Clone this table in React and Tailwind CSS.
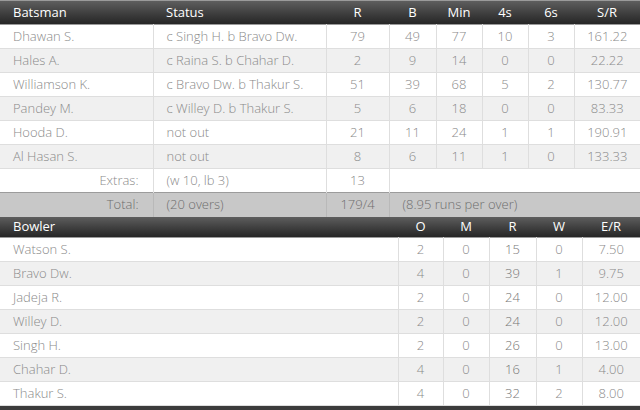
import React from "react";

const bat = [
  ["Dhawan S.", "c Singh H. b Bravo Dw.", "79", "49", "77", "10", "3", "161.22"],
  ["Hales A.", "c Raina S. b Chahar D.", "2", "9", "14", "0", "0", "22.22"],
  ["Williamson K.", "c Bravo Dw. b Thakur S.", "51", "39", "68", "5", "2", "130.77"],
  ["Pandey M.", "c Willey D. b Thakur S.", "5", "6", "18", "0", "0", "83.33"],
  ["Hooda D.", "not out", "21", "11", "24", "1", "1", "190.91"],
  ["Al Hasan S.", "not out", "8", "6", "11", "1", "0", "133.33"],
];

const bowl = [
  ["Watson S.", "2", "0", "15", "0", "7.50"],
  ["Bravo Dw.", "4", "0", "39", "1", "9.75"],
  ["Jadeja R.", "2", "0", "24", "0", "12.00"],
  ["Willey D.", "2", "0", "24", "0", "12.00"],
  ["Singh H.", "2", "0", "26", "0", "13.00"],
  ["Chahar D.", "4", "0", "16", "1", "4.00"],
  ["Thakur S.", "4", "0", "32", "2", "8.00"],
];

const head = "h-[24px] bg-linear-to-b from-[#5e5e5e] to-[#262626] text-white text-[13px] border-b border-[#9a9a9a]";
const cell = "border-b border-r border-[#dedede] last:border-r-0 text-center px-0";

export default function App() {
  return (
    <div className="w-[640px] h-[410px] bg-white overflow-hidden text-[13px] font-light text-[#8a8a8a] leading-none" style={{ fontFamily: "'Open Sans', 'DejaVu Sans', sans-serif" }}>
      <table className="w-[640px] table-fixed border-collapse">
        <colgroup>
          <col className="w-[153px]" />
          <col className="w-[173px]" />
          <col className="w-[63px]" />
          <col className="w-[47px]" />
          <col className="w-[46px]" />
          <col className="w-[46px]" />
          <col className="w-[46px]" />
          <col className="w-[66px]" />
        </colgroup>
        <thead>
          <tr className={head}>
            <th className="text-left pl-[13px] font-normal border-t border-[#9a9a9a]">Batsman</th>
            <th className="text-left pl-[13px] font-normal border-t border-[#9a9a9a]">Status</th>
            <th className="font-normal border-t border-[#9a9a9a]">R</th>
            <th className="font-normal border-t border-[#9a9a9a]">B</th>
            <th className="font-normal border-t border-[#9a9a9a]">Min</th>
            <th className="font-normal border-t border-[#9a9a9a]">4s</th>
            <th className="font-normal border-t border-[#9a9a9a]">6s</th>
            <th className="font-normal border-t border-[#9a9a9a]">S/R</th>
          </tr>
        </thead>
        <tbody>
          {bat.map((r, i) => (
            <tr key={i} className={`h-[24px] ${i % 2 ? "bg-[#f0f0f0]" : "bg-white"}`}>
              <td className={`${cell} !text-left pl-[13px] whitespace-nowrap`}>{r[0]}</td>
              <td className={`${cell} !text-left pl-[13px] whitespace-nowrap`}>{r[1]}</td>
              {r.slice(2).map((v, j) => (
                <td key={j} className={cell}>{v}</td>
              ))}
            </tr>
          ))}
          <tr className="h-[24px] bg-white">
            <td className="border-r border-[#dedede] text-right pr-[14px]">Extras:</td>
            <td className="border-r border-[#dedede] text-left pl-[13px]">(w 10, lb 3)</td>
            <td className="border-r border-[#dedede] text-center">13</td>
            <td colSpan={5}></td>
          </tr>
          <tr className="h-[24px] bg-[#c8c8c8] text-[#6e6e6e] border-t border-[#9c9c9c]">
            <td className="border-r border-[#b9b9b9] text-right pr-[14px]">Total:</td>
            <td className="border-r border-[#b9b9b9] text-left pl-[13px]">(20 overs)</td>
            <td className="border-r border-[#b9b9b9] text-center">179/4</td>
            <td colSpan={5} className="text-left pl-[13px] whitespace-nowrap">(8.95 runs per over)</td>
          </tr>
        </tbody>
      </table>
      <table className="w-[640px] table-fixed border-collapse">
        <colgroup>
          <col className="w-[398px]" />
          <col className="w-[45px]" />
          <col className="w-[46px]" />
          <col className="w-[47px]" />
          <col className="w-[46px]" />
          <col className="w-[58px]" />
        </colgroup>
        <thead>
          <tr className={`${head} !h-[21px]`}>
            <th className="text-left pl-[13px] font-normal">Bowler</th>
            <th className="font-normal">O</th>
            <th className="font-normal">M</th>
            <th className="font-normal">R</th>
            <th className="font-normal">W</th>
            <th className="font-normal">E/R</th>
          </tr>
        </thead>
        <tbody>
          {bowl.map((r, i) => (
            <tr key={i} className={`h-[24px] ${i % 2 ? "bg-[#f0f0f0]" : "bg-white"}`}>
              <td className={`${cell} !text-left pl-[13px]`}>{r[0]}</td>
              {r.slice(1).map((v, j) => (
                <td key={j} className={`${cell} ${j === 2 ? "!text-[#777777] font-light" : ""}`}>{v}</td>
              ))}
            </tr>
          ))}
        </tbody>
      </table>
      <div className="h-[8px] bg-[#3c3c3c]"></div>
    </div>
  );
}
